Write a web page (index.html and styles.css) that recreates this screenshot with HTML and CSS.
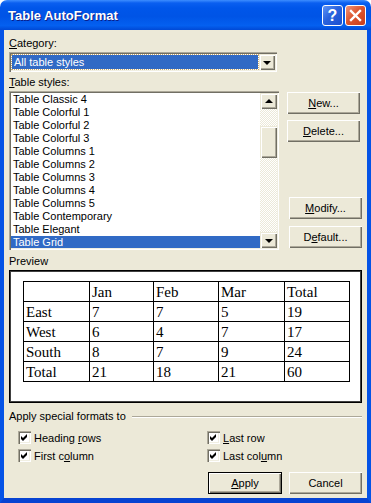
FILE: index.html
```html
<!DOCTYPE html>
<html lang="en">

<head>
    <meta charset="UTF-8">
    <title>Table AutoFormat</title>
    <link rel="stylesheet" href="styles.css">
</head>

<body>
    <div class="window">
        <div class="titlebar">
            <span class="title">Table AutoFormat</span>
            <div class="caption-buttons">
                <span class="cap-btn help">?</span>
                <span class="cap-btn close">
                    <svg width="19" height="19" viewBox="0 0 19 19">
                        <path d="M5 5 L14 14 M14 5 L5 14" stroke="#fff" stroke-width="2.4" stroke-linecap="square" />
                    </svg>
                </span>
            </div>
        </div>

        <div class="client">
            <div class="field-label"><u>C</u>ategory:</div>
            <div class="combo">
                <div class="combo-value">All table styles</div>
                <span class="scroll-btn combo-btn"><i class="arrow-down"></i></span>
            </div>

            <div class="field-label"><u>T</u>able styles:</div>
            <div class="styles-row">
                <div class="listbox">
                    <ul class="items">
                        <li>Table Classic 4</li>
                        <li>Table Colorful 1</li>
                        <li>Table Colorful 2</li>
                        <li>Table Colorful 3</li>
                        <li>Table Columns 1</li>
                        <li>Table Columns 2</li>
                        <li>Table Columns 3</li>
                        <li>Table Columns 4</li>
                        <li>Table Columns 5</li>
                        <li>Table Contemporary</li>
                        <li>Table Elegant</li>
                        <li class="selected">Table Grid</li>
                    </ul>
                    <div class="scrollbar">
                        <span class="scroll-btn"><i class="arrow-up"></i></span>
                        <div class="track">
                            <span class="thumb"></span>
                        </div>
                        <span class="scroll-btn"><i class="arrow-down"></i></span>
                    </div>
                </div>
                <div class="side-buttons">
                    <button class="btn"><u>N</u>ew...</button>
                    <button class="btn"><u>D</u>elete...</button>
                    <button class="btn shifted push-down"><u>M</u>odify...</button>
                    <button class="btn shifted">D<u>e</u>fault...</button>
                </div>
            </div>

            <div class="field-label preview-label">Preview</div>
            <div class="preview">
                <table class="sample">
                    <tr><td></td><td>Jan</td><td>Feb</td><td>Mar</td><td>Total</td></tr>
                    <tr><td>East</td><td>7</td><td>7</td><td>5</td><td>19</td></tr>
                    <tr><td>West</td><td>6</td><td>4</td><td>7</td><td>17</td></tr>
                    <tr><td>South</td><td>8</td><td>7</td><td>9</td><td>24</td></tr>
                    <tr><td>Total</td><td>21</td><td>18</td><td>21</td><td>60</td></tr>
                </table>
            </div>

            <div class="group-title">
                <span>Apply special formats to</span>
                <span class="etched"></span>
            </div>
            <div class="checks">
                <label class="check"><span class="box"><svg width="9" height="9" viewBox="0 0 9 9"><polygon points="1,3 3,5 7,1 7,4 3,8 1,6" fill="#000" /></svg></span><span>Heading <u>r</u>ows</span></label>
                <label class="check"><span class="box"><svg width="9" height="9" viewBox="0 0 9 9"><polygon points="1,3 3,5 7,1 7,4 3,8 1,6" fill="#000" /></svg></span><span><u>L</u>ast row</span></label>
                <label class="check"><span class="box"><svg width="9" height="9" viewBox="0 0 9 9"><polygon points="1,3 3,5 7,1 7,4 3,8 1,6" fill="#000" /></svg></span><span>First c<u>o</u>lumn</span></label>
                <label class="check"><span class="box"><svg width="9" height="9" viewBox="0 0 9 9"><polygon points="1,3 3,5 7,1 7,4 3,8 1,6" fill="#000" /></svg></span><span>Last col<u>u</u>mn</span></label>
            </div>

            <div class="footer">
                <button class="btn default"><u>A</u>pply</button>
                <button class="btn">Cancel</button>
            </div>
        </div>
    </div>
</body>

</html>
```

FILE: styles.css
```css
body {
    margin: 0;
    background-color: #ffffff;
    font-family: 'Liberation Sans', Arial, sans-serif;
    font-size: 11px;
    color: #000;
}

.window {
    width: 371px;
    height: 503px;
    display: flex;
    flex-direction: column;
}

/* title bar */
.titlebar {
    height: 30px;
    box-sizing: border-box;
    padding: 0 5px 0 8px;
    display: flex;
    align-items: center;
    justify-content: space-between;
    border-radius: 7px 7px 0 0;
    background: linear-gradient(#3d8dff 0, #0a5ff0 3px, #0056ea 8px, #0054e6 55%, #0460f0 85%, #0049d6 100%);
}

.title {
    color: #fff;
    font-weight: bold;
    font-size: 13px;
    text-shadow: 1px 1px #0a1e8a;
    margin-top: 1px;
}

.caption-buttons {
    display: flex;
    gap: 2px;
    margin-top: 1px;
}

.cap-btn {
    width: 19px;
    height: 19px;
    border: 1px solid #fff;
    border-radius: 3px;
    display: flex;
    align-items: center;
    justify-content: center;
}

.help {
    background: linear-gradient(135deg, #5f95f7 0, #2a63dd 45%, #1b4fd0 100%);
    color: #fff;
    font-weight: bold;
    font-size: 16px;
}

.close {
    background: linear-gradient(135deg, #f0957a 0, #dd5630 45%, #c83c1a 100%);
}

/* client area */
.client {
    height: 468px;
    background-color: #ece9d8;
    border-left: 4px solid #0553e6;
    border-right: 4px solid #0553e6;
    border-bottom: 5px solid #0743d2;
    padding: 0 5px;
}

.field-label {
    line-height: 13px;
    margin-top: 7px;
    margin-bottom: 2px;
}

.field-label + .combo + .field-label {
    margin-top: 4px;
}

.combo {
    width: 268px;
    height: 20px;
    box-sizing: border-box;
    padding: 2px;
    background-color: #fff;
    box-shadow: inset 1px 1px #aca899, inset 2px 2px #716f64, inset -1px -1px #fff, inset -2px -2px #f1efe2;
    display: flex;
}

.combo-value {
    flex: 1;
    margin: 1px;
    padding-left: 2px;
    line-height: 14px;
    background-color: #316ac5;
    color: #fff;
    outline: 1px dotted #c9a96a;
}

.scroll-btn {
    display: flex;
    align-items: center;
    justify-content: center;
    width: 17px;
    height: 16px;
    box-sizing: border-box;
    background-color: #ece9d8;
    box-shadow: inset 1px 1px #ece9d8, inset 2px 2px #fff, inset -1px -1px #716f64, inset -2px -2px #aca899;
}

.combo-btn {
    width: 16px;
}

.arrow-down,
.arrow-up {
    width: 0;
    height: 0;
    border-left: 4px solid transparent;
    border-right: 4px solid transparent;
}

.arrow-down {
    border-top: 4px solid #000;
    margin-top: 1px;
}

.arrow-up {
    border-bottom: 4px solid #000;
    margin-top: -1px;
}

/* styles list + side buttons */
.styles-row {
    display: flex;
    gap: 8px;
}

.listbox {
    width: 270px;
    height: 159px;
    box-sizing: border-box;
    padding: 2px;
    background-color: #fff;
    box-shadow: inset 1px 1px #aca899, inset 2px 2px #716f64, inset -1px -1px #fff, inset -2px -2px #f1efe2;
    display: flex;
}

.items {
    list-style: none;
    margin: 0;
    padding: 0;
    flex: 1;
    overflow: hidden;
}

.items li {
    height: 13px;
    line-height: 13px;
    padding-left: 2px;
    white-space: nowrap;
}

.items li.selected {
    background-color: #316ac5;
    color: #fff;
}

.scrollbar {
    width: 17px;
    display: flex;
    flex-direction: column;
}

.track {
    flex: 1;
    background: repeating-conic-gradient(#fff 0 25%, #ece9d8 0 50%) 0 0 / 2px 2px;
    padding-top: 17px;
}

.thumb {
    display: block;
    height: 32px;
    background-color: #ece9d8;
    box-shadow: inset 1px 1px #ece9d8, inset 2px 2px #fff, inset -1px -1px #716f64, inset -2px -2px #aca899;
}

.side-buttons {
    display: flex;
    flex-direction: column;
    gap: 6px;
    padding-top: 1px;
    padding-bottom: 2px;
}

.btn {
    width: 73px;
    height: 22px;
    padding: 0;
    border: none;
    font: inherit;
    color: #000;
    background-color: #ece9d8;
    box-shadow: inset 1px 1px #fff, inset -1px -1px #716f64, inset -2px -2px #aca899;
}

.shifted {
    margin-left: 2px;
}

.push-down {
    margin-top: auto;
    margin-bottom: 1px;
}

/* preview */
.preview-label {
    margin-top: 5px;
}

.preview {
    height: 133px;
    box-sizing: border-box;
    background-color: #fff;
    border: 1px solid #000;
    box-shadow: inset 1px 1px #404040, inset -1px -1px #404040;
    padding: 10px 0 0 13px;
}

.sample {
    border-collapse: collapse;
    font-family: 'Liberation Serif', 'Times New Roman', serif;
    font-size: 15px;
}

.sample td {
    border: 1px solid #000;
    height: 19px;
    padding: 0 0 0 2px;
    line-height: 17px;
    vertical-align: bottom;
}

.sample td:nth-child(1) { width: 63px; }
.sample td:nth-child(2) { width: 61px; }
.sample td:nth-child(3) { width: 62px; }
.sample td:nth-child(4) { width: 63px; }
.sample td:nth-child(5) { width: 62px; }

/* special formats */
.group-title {
    display: flex;
    align-items: center;
    gap: 6px;
    margin-top: 7px;
    line-height: 13px;
}

.etched {
    flex: 1;
    height: 1px;
    background-color: #aca899;
    border-bottom: 1px solid #fff;
}

.checks {
    display: grid;
    grid-template-columns: 189px 1fr;
    row-gap: 5px;
    margin-top: 8px;
    padding-left: 9px;
}

.check {
    display: flex;
    align-items: center;
    gap: 3px;
    height: 13px;
}

.box {
    width: 13px;
    height: 13px;
    box-sizing: border-box;
    padding: 2px;
    background-color: #fff;
    box-shadow: inset 1px 1px #aca899, inset 2px 2px #716f64, inset -1px -1px #fff, inset -2px -2px #f1efe2;
}

.box svg {
    display: block;
}

.footer {
    display: flex;
    justify-content: flex-end;
    gap: 7px;
    margin-top: 10px;
}

.btn.default {
    width: 74px;
    box-shadow: inset 0 0 0 1px #000, inset 2px 2px #fff, inset -2px -2px #716f64, inset -3px -3px #aca899;
}
```
